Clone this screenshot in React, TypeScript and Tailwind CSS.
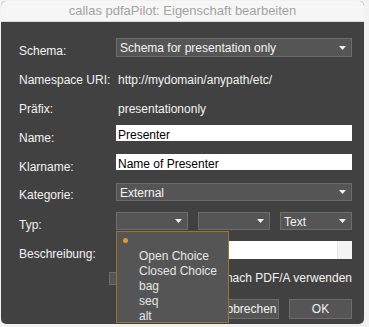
import React from "react";

const Arrow = () => (
  <svg width="7" height="4" viewBox="0 0 7 4" className="shrink-0">
    <path d="M0 0 L7 0 L3.5 4 Z" fill="#f2f2f2" />
  </svg>
);

function Select({ text, className = "", h = "h-[19px]" }: { text?: string; className?: string; h?: string }) {
  return (
    <div
      className={`flex items-center justify-between ${h} bg-[#555555] border border-[#6c6c6c] pl-[3px] pr-[5px] text-[12px] text-[#f4f4f4] ${className}`}
    >
      <span className="leading-none whitespace-nowrap pt-[1px]">{text ?? ""}</span>
      <Arrow />
    </div>
  );
}

export default function App() {
  const font = { fontFamily: '"Liberation Sans", Arial, sans-serif' };
  return (
    <div className="w-[369px] h-[327px] bg-[#f2f2f2] overflow-hidden" style={font}>
      <div className="ml-[1px] mt-[1px] w-[363px] h-[323px] rounded-[5px] overflow-hidden bg-[#414141] flex flex-col">
        <div className="h-[21px] shrink-0 bg-[#f6f6f6] flex items-center justify-center text-[13px] text-[#a3a3a3] border-b border-[#d8d8d8]">
          callas pdfaPilot: Eigenschaft bearbeiten
        </div>
        <div className="flex flex-col pl-[18px] pr-[12px] text-[12px] text-[#f2f2f2] whitespace-nowrap">
          {/* Schema */}
          <div className="flex items-center h-[19px] mt-[16px]">
            <div className="w-[97px] shrink-0 mt-[6px]">Schema:</div>
            <Select text="Schema for presentation only" className="flex-1" />
          </div>
          {/* Namespace */}
          <div className="flex items-center h-[18px] mt-[14px]">
            <div className="w-[97px] shrink-0">Namespace URI:</div>
            <div className="pl-[2px]">http://mydomain/anypath/etc/</div>
          </div>
          {/* Präfix */}
          <div className="flex items-center h-[18px] mt-[11px]">
            <div className="w-[97px] shrink-0">Präfix:</div>
            <div className="pl-[2px]">presentationonly</div>
          </div>
          {/* Name */}
          <div className="flex items-center h-[16px] mt-[7px]">
            <div className="w-[97px] shrink-0 mt-[9px]">Name:</div>
            <div className="flex-1 h-full bg-white text-black pl-[2px] pt-[3px] flex items-center leading-none">Presenter</div>
          </div>
          {/* Klarname */}
          <div className="flex items-center h-[16px] mt-[13px]">
            <div className="w-[97px] shrink-0 mt-[9px]">Klarname:</div>
            <div className="flex-1 h-full bg-white text-black pl-[2px] pt-[3px] flex items-center leading-none">Name of Presenter</div>
          </div>
          {/* Kategorie */}
          <div className="flex items-center h-[18px] mt-[13px]">
            <div className="w-[97px] shrink-0 mt-[6px]">Kategorie:</div>
            <Select text="External" h="h-[18px]" className="flex-1" />
          </div>
          {/* Typ */}
          <div className="flex items-center h-[18px] mt-[11px]">
            <div className="w-[97px] shrink-0 mt-[8px]">Typ:</div>
            <div className="flex-1 flex gap-[10px]">
              <div className="relative w-[72px]">
                <Select h="h-[18px]" />
                <div className="absolute left-0 top-[19px] w-[113px] h-[92px] bg-[#555555] border border-[#9a7434] z-10 text-[#e6e6e6]">
                  <div className="absolute left-[6px] top-[6px] w-[5px] h-[5px] rounded-full bg-[#e3962c]" />
                  <div className="flex flex-col pl-[22px] pt-[17px] leading-[15px]">
                    <span>Open Choice</span>
                    <span>Closed Choice</span>
                    <span>bag</span>
                    <span>seq</span>
                    <span>alt</span>
                  </div>
                </div>
              </div>
              <Select h="h-[18px]" className="w-[72px]" />
              <Select text="Text" h="h-[18px]" className="w-[72px]" />
            </div>
          </div>
          {/* Beschreibung */}
          <div className="flex items-center h-[18px] mt-[11px]">
            <div className="w-[97px] shrink-0 mt-[8px]">Beschreibung:</div>
            <div className="flex-1 h-full bg-white flex justify-end">
              <div className="w-[15px] h-full bg-[#f4f4f4] border-l border-[#e6e6e6]" />
            </div>
          </div>
          {/* Checkbox */}
          <div className="flex items-center justify-end h-[16px] mt-[11px]">
            <div className="w-[13px] h-[13px] bg-[#555] border border-[#6c6c6c] mr-[5px]" />
            <span>Für Konvertierung nach PDF/A verwenden</span>
          </div>
          {/* Buttons */}
          <div className="flex justify-end gap-[10px] h-[20px] mt-[13px]">
            <div className="w-[63px] h-full bg-[#555555] border border-[#6c6c6c] flex items-center justify-center">Abbrechen</div>
            <div className="w-[63px] h-full bg-[#555555] border border-[#6c6c6c] flex items-center justify-center">OK</div>
          </div>
        </div>
      </div>
    </div>
  );
}
